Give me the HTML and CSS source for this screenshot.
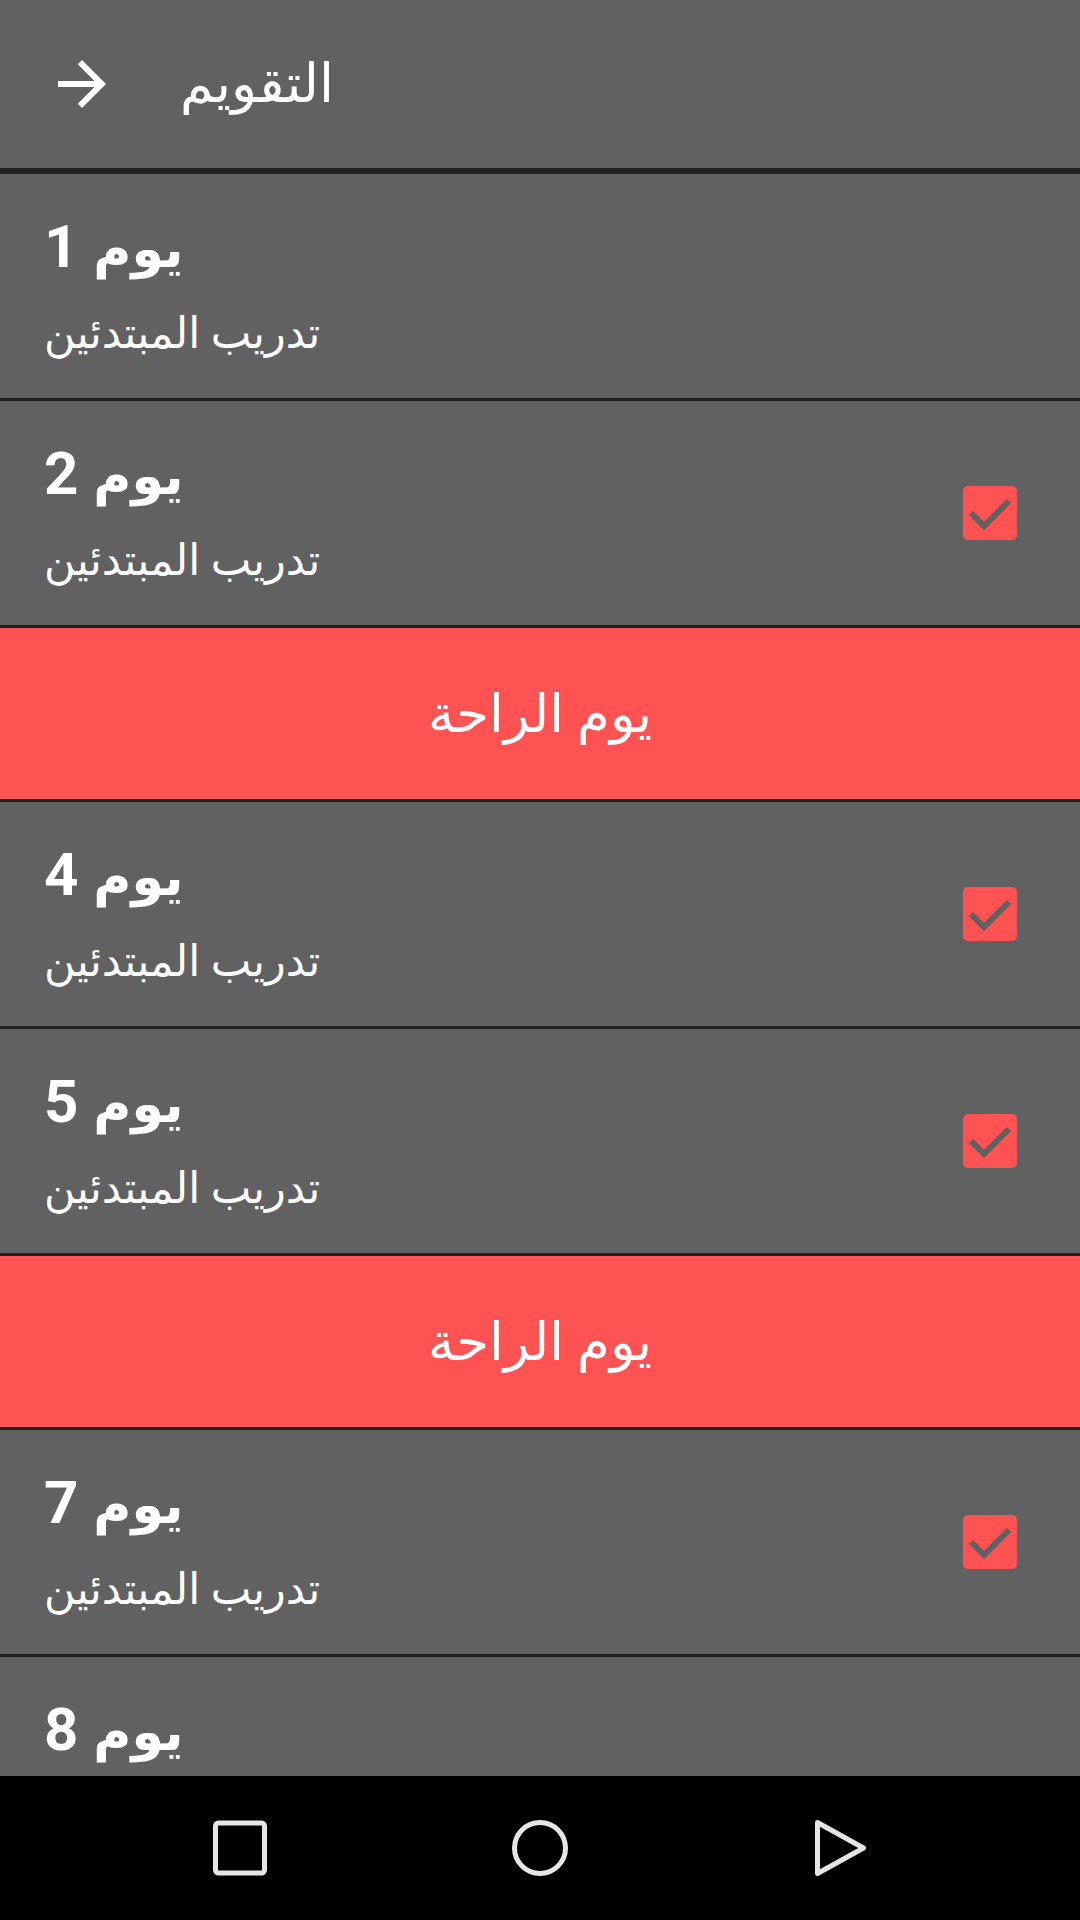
FILE: index.html
```html
<!DOCTYPE html>
<html lang="ar">
<head>
<meta charset="utf-8">
<title>التقويم</title>
<link rel="stylesheet" href="styles.css">
</head>
<body>
<div class="screen">
  <header class="toolbar">
    <svg class="toolbar-icon" viewBox="0 0 24 24" width="72" height="72"><path d="M12 4l-1.41 1.41L16.17 11H4v2h12.17l-5.58 5.59L12 20l8-8z" fill="#ffffff"/></svg>
    <div class="toolbar-title">التقويم</div>
  </header>
  <main class="list">
    <div class="day">
      <div class="day-text">
        <div class="day-title" dir="rtl"><span class="ar">يوم</span> 1</div>
        <div class="day-sub" dir="rtl">تدريب المبتدئين</div>
      </div>
    </div>
    <div class="day">
      <div class="day-text">
        <div class="day-title" dir="rtl"><span class="ar">يوم</span> 2</div>
        <div class="day-sub" dir="rtl">تدريب المبتدئين</div>
      </div>
      <svg class="check" viewBox="0 0 54 54" width="54" height="54"><rect width="54" height="54" rx="5" fill="#ff5252"/><polyline points="8,27 21,40 46,15" fill="none" stroke="#616161" stroke-width="6"/></svg>
    </div>
    <div class="rest">يوم الراحة</div>
    <div class="day">
      <div class="day-text">
        <div class="day-title" dir="rtl"><span class="ar">يوم</span> 4</div>
        <div class="day-sub" dir="rtl">تدريب المبتدئين</div>
      </div>
      <svg class="check" viewBox="0 0 54 54" width="54" height="54"><rect width="54" height="54" rx="5" fill="#ff5252"/><polyline points="8,27 21,40 46,15" fill="none" stroke="#616161" stroke-width="6"/></svg>
    </div>
    <div class="day">
      <div class="day-text">
        <div class="day-title" dir="rtl"><span class="ar">يوم</span> 5</div>
        <div class="day-sub" dir="rtl">تدريب المبتدئين</div>
      </div>
      <svg class="check" viewBox="0 0 54 54" width="54" height="54"><rect width="54" height="54" rx="5" fill="#ff5252"/><polyline points="8,27 21,40 46,15" fill="none" stroke="#616161" stroke-width="6"/></svg>
    </div>
    <div class="rest">يوم الراحة</div>
    <div class="day">
      <div class="day-text">
        <div class="day-title" dir="rtl"><span class="ar">يوم</span> 7</div>
        <div class="day-sub" dir="rtl">تدريب المبتدئين</div>
      </div>
      <svg class="check" viewBox="0 0 54 54" width="54" height="54"><rect width="54" height="54" rx="5" fill="#ff5252"/><polyline points="8,27 21,40 46,15" fill="none" stroke="#616161" stroke-width="6"/></svg>
    </div>
    <div class="day">
      <div class="day-text">
        <div class="day-title" dir="rtl"><span class="ar">يوم</span> 8</div>
        <div class="day-sub" dir="rtl">تدريب المبتدئين</div>
      </div>
    </div>
  </main>
  <nav class="navbar">
    <svg class="nav-icon" viewBox="0 0 72 72" width="72" height="72"><rect x="11.5" y="11" width="49" height="50" rx="3" fill="none" stroke="#e6e6e6" stroke-width="5"/></svg>
    <svg class="nav-icon" viewBox="0 0 72 72" width="72" height="72"><circle cx="36" cy="36" r="25.5" fill="none" stroke="#e6e6e6" stroke-width="5"/></svg>
    <svg class="nav-icon" viewBox="0 0 72 72" width="72" height="72"><polygon points="13.5,10.5 59.5,36 13.5,61.5" fill="none" stroke="#e6e6e6" stroke-width="5" stroke-linejoin="round"/></svg>
  </nav>
</div>
</body>
</html>
```

FILE: styles.css
```css
html, body {
  margin: 0;
  padding: 0;
  background: #000;
}
.screen {
  width: 1080px;
  height: 1920px;
  display: flex;
  flex-direction: column;
  overflow: hidden;
  font-family: Roboto, "DejaVu Sans", sans-serif;
  color: #ffffff;
}
.toolbar {
  height: 168px;
  flex: none;
  background: #616161;
  border-bottom: 6px solid #212121;
  display: flex;
  align-items: center;
  padding-left: 46px;
  gap: 62px;
}
.toolbar-icon {
  flex: none;
}
.toolbar-title {
  font-size: 54px;
  line-height: 70px;
}
.list {
  flex: 1;
  overflow: hidden;
  background: #616161;
}
.day {
  height: 224px;
  border-bottom: 3px solid #212121;
  display: flex;
  align-items: center;
  padding: 0 63px 0 44px;
  background: #616161;
}
.day-text {
  flex: 1;
  display: flex;
  flex-direction: column;
  gap: 18px;
  margin-top: 2px;
}
.day-title {
  font-size: 60px;
  line-height: 70px;
  font-weight: bold;
  text-align: left;
}
.day-title .ar {
  font-size: 52px;
}
.day-sub {
  font-size: 43px;
  line-height: 60px;
  text-align: left;
}
.check {
  flex: none;
  display: block;
}
.rest {
  height: 171px;
  border-bottom: 3px solid #212121;
  background: #ff5252;
  display: flex;
  align-items: center;
  justify-content: center;
  font-size: 53px;
}
.navbar {
  height: 144px;
  flex: none;
  background: #000;
  display: flex;
  align-items: center;
  justify-content: center;
  gap: 228px;
}
.nav-icon {
  display: block;
}
```
